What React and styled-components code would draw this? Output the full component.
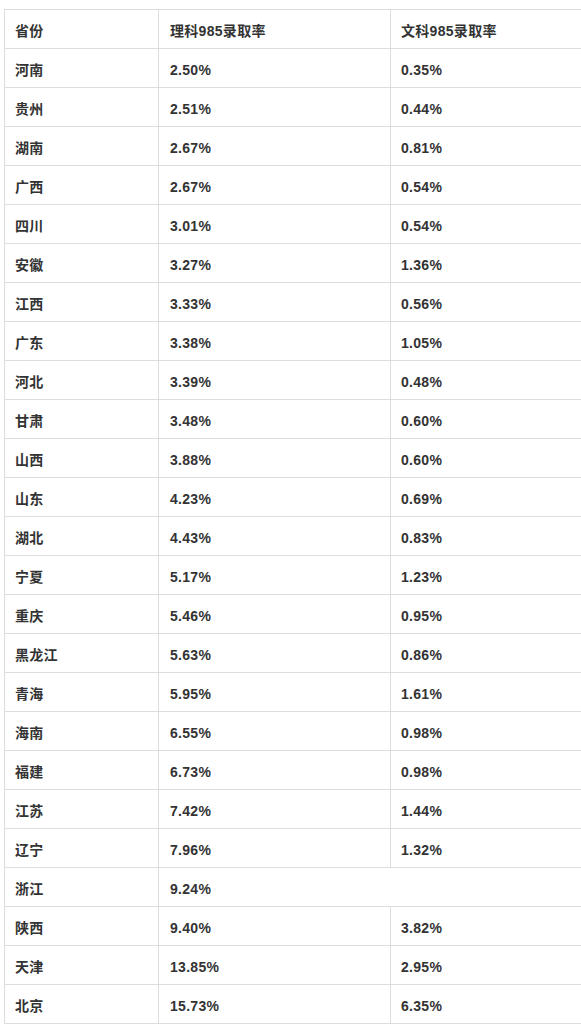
import styled, { createGlobalStyle } from "styled-components";

const GlobalStyle = createGlobalStyle`
  body {
    margin: 0;
    background: #fff;
  }
`;

const Page = styled.div`
  padding: 9px 0 0 4px;
  width: 581px;
  overflow: hidden;
`;

const Table = styled.table`
  width: 580px;
  border-collapse: collapse;
  table-layout: fixed;
  font-family: "Liberation Sans", "Noto Sans CJK SC", sans-serif;
  font-size: 14px;
  font-weight: 700;
  color: #333;
`;

const Row = styled.tr`
  height: 39px;
`;

const Cell = styled.td`
  box-sizing: border-box;
  height: 39px;
  padding: 3px 0 0 ${(p) => p.$pad || 10}px;
  border: 1px solid #dddddd;
  vertical-align: middle;
  line-height: 20px;
  letter-spacing: 0.3px;
  white-space: nowrap;
`;

const headers = ["省份", "理科985录取率", "文科985录取率"];

const rows = [
  ["河南", "2.50%", "0.35%"],
  ["贵州", "2.51%", "0.44%"],
  ["湖南", "2.67%", "0.81%"],
  ["广西", "2.67%", "0.54%"],
  ["四川", "3.01%", "0.54%"],
  ["安徽", "3.27%", "1.36%"],
  ["江西", "3.33%", "0.56%"],
  ["广东", "3.38%", "1.05%"],
  ["河北", "3.39%", "0.48%"],
  ["甘肃", "3.48%", "0.60%"],
  ["山西", "3.88%", "0.60%"],
  ["山东", "4.23%", "0.69%"],
  ["湖北", "4.43%", "0.83%"],
  ["宁夏", "5.17%", "1.23%"],
  ["重庆", "5.46%", "0.95%"],
  ["黑龙江", "5.63%", "0.86%"],
  ["青海", "5.95%", "1.61%"],
  ["海南", "6.55%", "0.98%"],
  ["福建", "6.73%", "0.98%"],
  ["江苏", "7.42%", "1.44%"],
  ["辽宁", "7.96%", "1.32%"],
  ["浙江", "9.24%", null],
  ["陕西", "9.40%", "3.82%"],
  ["天津", "13.85%", "2.95%"],
  ["北京", "15.73%", "6.35%"],
];

function DataRow({ cells }) {
  const [name, sci, arts] = cells;
  return (
    <Row>
      <Cell $pad={10}>{name}</Cell>
      {arts === null ? (
        <Cell $pad={11} colSpan={2}>
          {sci}
        </Cell>
      ) : (
        <>
          <Cell $pad={11}>{sci}</Cell>
          <Cell $pad={10}>{arts}</Cell>
        </>
      )}
    </Row>
  );
}

export default function App() {
  return (
    <Page>
      <GlobalStyle />
      <Table>
        <colgroup>
          <col style={{ width: 154 }} />
          <col style={{ width: 232 }} />
          <col />
        </colgroup>
        <tbody>
          <DataRow cells={headers} />
          {rows.map((r) => (
            <DataRow key={r[0]} cells={r} />
          ))}
        </tbody>
      </Table>
    </Page>
  );
}
